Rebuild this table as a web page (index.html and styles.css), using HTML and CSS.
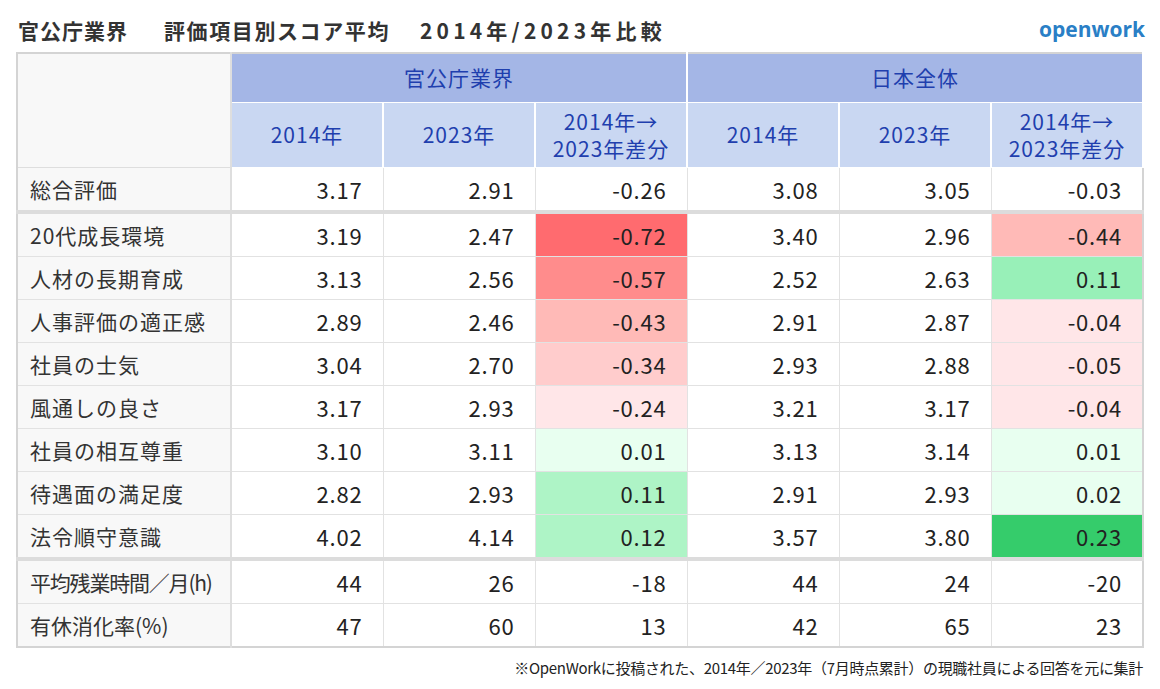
FILE: index.html
```html
<!DOCTYPE html>
<html lang="ja">
<head>
<meta charset="utf-8">
<title>官公庁業界 評価項目別スコア平均</title>
<link rel="stylesheet" href="styles.css">
</head>
<body>
<div class="page">
  <header class="top">
    <h1 class="title"><span class="t1">官公庁業界</span><span class="t2">評価項目別スコア平均</span><span class="t3">2014年/2023年比較</span></h1>
    <div class="logo">openwork</div>
  </header>
  <table class="score">
    <colgroup>
      <col class="c-label"><col class="c-num"><col class="c-num"><col class="c-num"><col class="c-num"><col class="c-num"><col class="c-num">
    </colgroup>
    <thead>
      <tr class="h1">
        <th class="corner" rowspan="2"></th>
        <th colspan="3">官公庁業界</th>
        <th colspan="3">日本全体</th>
      </tr>
      <tr class="h2">
        <th>2014年</th><th>2023年</th><th>2014年→<br>2023年差分</th>
        <th>2014年</th><th>2023年</th><th>2014年→<br>2023年差分</th>
      </tr>
    </thead>
    <tbody>
      <tr class="sep-after"><td class="lbl">総合評価</td><td>3.17</td><td>2.91</td><td>-0.26</td><td>3.08</td><td>3.05</td><td>-0.03</td></tr>
      <tr><td class="lbl">20代成長環境</td><td>3.19</td><td>2.47</td><td class="r5">-0.72</td><td>3.40</td><td>2.96</td><td class="r3">-0.44</td></tr>
      <tr><td class="lbl">人材の長期育成</td><td>3.13</td><td>2.56</td><td class="r4">-0.57</td><td>2.52</td><td>2.63</td><td class="g2b">0.11</td></tr>
      <tr><td class="lbl">人事評価の適正感</td><td>2.89</td><td>2.46</td><td class="r3">-0.43</td><td>2.91</td><td>2.87</td><td class="r1">-0.04</td></tr>
      <tr><td class="lbl">社員の士気</td><td>3.04</td><td>2.70</td><td class="r2">-0.34</td><td>2.93</td><td>2.88</td><td class="r1">-0.05</td></tr>
      <tr><td class="lbl">風通しの良さ</td><td>3.17</td><td>2.93</td><td class="r1">-0.24</td><td>3.21</td><td>3.17</td><td class="r1">-0.04</td></tr>
      <tr><td class="lbl">社員の相互尊重</td><td>3.10</td><td>3.11</td><td class="g1">0.01</td><td>3.13</td><td>3.14</td><td class="g1">0.01</td></tr>
      <tr><td class="lbl">待遇面の満足度</td><td>2.82</td><td>2.93</td><td class="g2">0.11</td><td>2.91</td><td>2.93</td><td class="g1">0.02</td></tr>
      <tr class="sep-after"><td class="lbl">法令順守意識</td><td>4.02</td><td>4.14</td><td class="g2">0.12</td><td>3.57</td><td>3.80</td><td class="g3">0.23</td></tr>
      <tr><td class="lbl tight">平均残業時間／月(h)</td><td>44</td><td>26</td><td>-18</td><td>44</td><td>24</td><td>-20</td></tr>
      <tr><td class="lbl tight2">有休消化率(%)</td><td>47</td><td>60</td><td>13</td><td>42</td><td>65</td><td>23</td></tr>
    </tbody>
  </table>
  <p class="note">※OpenWorkに投稿された、2014年／2023年（7月時点累計）の現職社員による回答を元に集計</p>
</div>
</body>
</html>
```
FILE: styles.css
```css
html, body {
  margin: 0;
  padding: 0;
  background: #ffffff;
}
body {
  font-family: "Noto Sans CJK JP", "Noto Sans", sans-serif;
  color: #222;
}
.page {
  width: 1127px;
  padding: 0 17px 0 16px;
}
.top {
  display: flex;
  justify-content: space-between;
  align-items: flex-end;
  height: 52px;
}
.title {
  margin: 0 0 0 2px;
  font-size: 21px;
  font-weight: 700;
  color: #333;
  line-height: 1;
  padding-bottom: 11px;
  display: flex;
  white-space: nowrap;
}
.t1 { letter-spacing: 1px; }
.t2 { margin-left: 36px; letter-spacing: 1.6px; }
.t3 { margin-left: 30px; letter-spacing: 4.2px; }
.logo {
  font-family: "Open Sans", "DejaVu Sans", sans-serif;
  font-weight: 700;
  font-size: 21px;
  color: #2a7fc6;
  letter-spacing: 0;
  line-height: 1;
  padding-bottom: 12px;
  margin-right: -2px;
}
.score {
  width: 1127px;
  border-collapse: collapse;
  border: 2px solid #d4d4d4;
  table-layout: fixed;
}
.c-label { width: 214px; }
.c-num { width: 152px; }
.score th {
  font-weight: 400;
  color: #1f3fae;
  font-size: 21px;
  letter-spacing: 1px;
  line-height: 1.3;
  padding: 0;
  white-space: nowrap;
}
.score .h1 th {
  background: #a4b6e6;
  height: 48px;
  border-left: 2px solid #ffffff;
  border-right: 2px solid #ffffff;
  border-bottom: 1px solid #ffffff;
  border-top: 0;
}
.score .h2 th {
  background: #c9d7f2;
  height: 64px;
  border: 1px solid #ffffff;
  border-right: 2px solid #ffffff;
}
.score th.corner {
  background: #f8f8f8;
  border-left: 0;
  border-bottom: 1px solid #dedede;
  border-right: 2px solid #dedede;
}
.score td {
  height: 42px;
  padding: 0 20px 0 12px;
  font-size: 22px;
  letter-spacing: 0.8px;
  text-align: right;
  border: 1px solid #e2e2e2;
  color: #222;
  background: #ffffff;
  white-space: nowrap;
  line-height: 1;
}
.score td.lbl {
  text-align: left;
  background: #f8f8f8;
  color: #333;
  border-right: 2px solid #dedede;
  padding-left: 12px;
  padding-right: 0;
  font-size: 21px;
  letter-spacing: 1px;
}
.score td.lbl.tight { letter-spacing: -1.2px; }
.score td.lbl.tight2 { letter-spacing: 0; }
.score tr.sep-after td {
  border-bottom: 4px solid #dcdcdc;
}
.score td.r5 { background: #ff6b6f; }
.score td.r4 { background: #ff8c8c; }
.score td.r3 { background: #ffbab7; }
.score td.r2 { background: #ffcccc; }
.score td.r1 { background: #ffe6e8; }
.score td.g1 { background: #e8fff0; }
.score td.g2 { background: #aef4c6; }
.score td.g2b { background: #98f0b8; }
.score td.g3 { background: #35cc6b; }
.note {
  margin: 9px 0 0 0;
  text-align: right;
  font-size: 15px;
  color: #222;
  letter-spacing: -0.3px;
  white-space: nowrap;
}
```
